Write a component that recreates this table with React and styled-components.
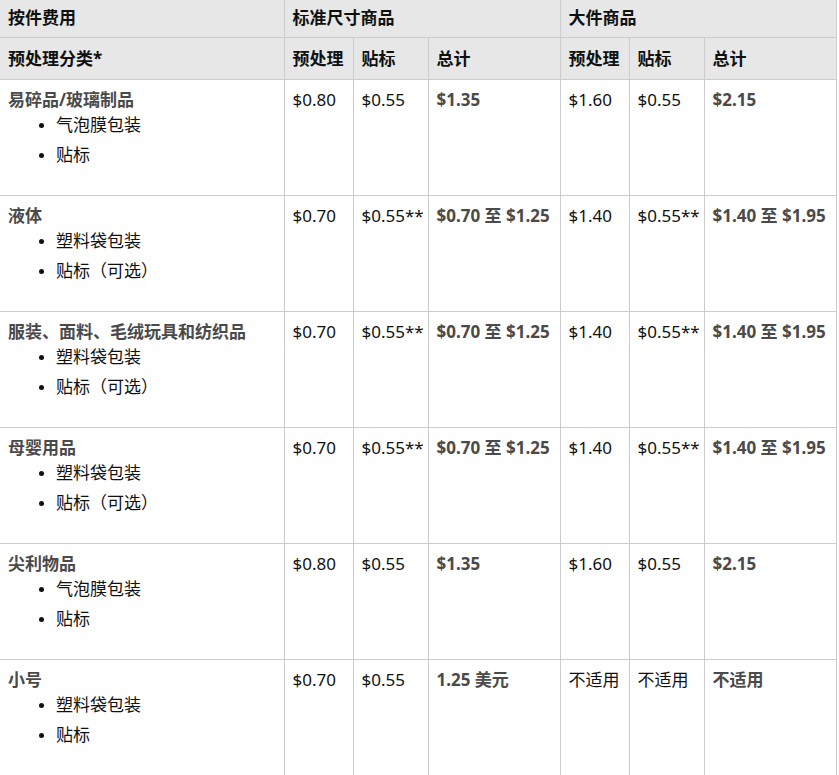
import styled, { createGlobalStyle } from 'styled-components';

const GlobalStyle = createGlobalStyle`
  html, body {
    margin: 0;
    padding: 0;
    background: #fff;
  }
  body {
    font-family: "Noto Sans", "Noto Sans CJK SC", sans-serif;
    color: #0f1111;
  }
`;

const Table = styled.table`
  width: 836px;
  table-layout: fixed;
  border-collapse: collapse;
  font-size: 17px;
`;

const HeadRow = styled.tr`
  height: ${(p) => p.$h}px;
  background: #e7e7e7;
  & > th {
    padding-bottom: ${(p) => p.$pb || 0}px;
  }
`;

const Th = styled.th`
  border: 1px solid #cccccc;
  border-top: none;
  padding: 0 8px;
  text-align: left;
  vertical-align: middle;
  font-weight: 700;
  color: #0f1111;
  white-space: nowrap;
  &:first-child {
    border-left: none;
  }
`;

const Row = styled.tr`
  height: 116px;
`;

const Td = styled.td`
  border: 1px solid #cccccc;
  padding: 8px 8px 0;
  vertical-align: top;
  line-height: 24px;
  white-space: nowrap;
  color: ${(p) => (p.$bold ? '#4a4a4a' : '#0f1111')};
  font-weight: ${(p) => (p.$bold ? 700 : 400)};
  &:first-child {
    border-left: none;
  }
`;

const Category = styled.div`
  font-weight: 700;
  color: #4a4a4a;
  line-height: 24px;
`;

const Steps = styled.ul`
  margin: 2px 0 0;
  padding-left: 48px;
  list-style: disc;
`;

const Step = styled.li`
  line-height: 22px;
  margin-bottom: 8px;
  &::marker {
    font-size: 14px;
  }
`;

const rows = [
  {
    name: '易碎品/玻璃制品',
    steps: ['气泡膜包装', '贴标'],
    vals: ['$0.80', '$0.55', '$1.35', '$1.60', '$0.55', '$2.15'],
  },
  {
    name: '液体',
    steps: ['塑料袋包装', '贴标（可选）'],
    vals: ['$0.70', '$0.55**', '$0.70 至 $1.25', '$1.40', '$0.55**', '$1.40 至 $1.95'],
  },
  {
    name: '服装、面料、毛绒玩具和纺织品',
    steps: ['塑料袋包装', '贴标（可选）'],
    vals: ['$0.70', '$0.55**', '$0.70 至 $1.25', '$1.40', '$0.55**', '$1.40 至 $1.95'],
  },
  {
    name: '母婴用品',
    steps: ['塑料袋包装', '贴标（可选）'],
    vals: ['$0.70', '$0.55**', '$0.70 至 $1.25', '$1.40', '$0.55**', '$1.40 至 $1.95'],
  },
  {
    name: '尖利物品',
    steps: ['气泡膜包装', '贴标'],
    vals: ['$0.80', '$0.55', '$1.35', '$1.60', '$0.55', '$2.15'],
  },
  {
    name: '小号',
    steps: ['塑料袋包装', '贴标'],
    vals: ['$0.70', '$0.55', '1.25 美元', '不适用', '不适用', '不适用'],
  },
];

const widths = [284, 69, 75, 132, 69, 75, 132];

const App = () => (
  <>
    <GlobalStyle />
    <Table>
      <colgroup>
        {widths.map((w, i) => (
          <col key={i} style={{ width: w }} />
        ))}
      </colgroup>
      <thead>
        <HeadRow $h={37} $pb={3}>
          <Th>按件费用</Th>
          <Th colSpan={3}>标准尺寸商品</Th>
          <Th colSpan={3}>大件商品</Th>
        </HeadRow>
        <HeadRow $h={42} $pb={1}>
          <Th>预处理分类*</Th>
          <Th>预处理</Th>
          <Th>贴标</Th>
          <Th>总计</Th>
          <Th>预处理</Th>
          <Th>贴标</Th>
          <Th>总计</Th>
        </HeadRow>
      </thead>
      <tbody>
        {rows.map((r) => (
          <Row key={r.name}>
            <Td>
              <Category>{r.name}</Category>
              <Steps>
                {r.steps.map((s) => (
                  <Step key={s}>{s}</Step>
                ))}
              </Steps>
            </Td>
            {r.vals.map((v, i) => (
              <Td key={i} $bold={i === 2 || i === 5}>
                {v}
              </Td>
            ))}
          </Row>
        ))}
      </tbody>
    </Table>
  </>
);

export default App;
